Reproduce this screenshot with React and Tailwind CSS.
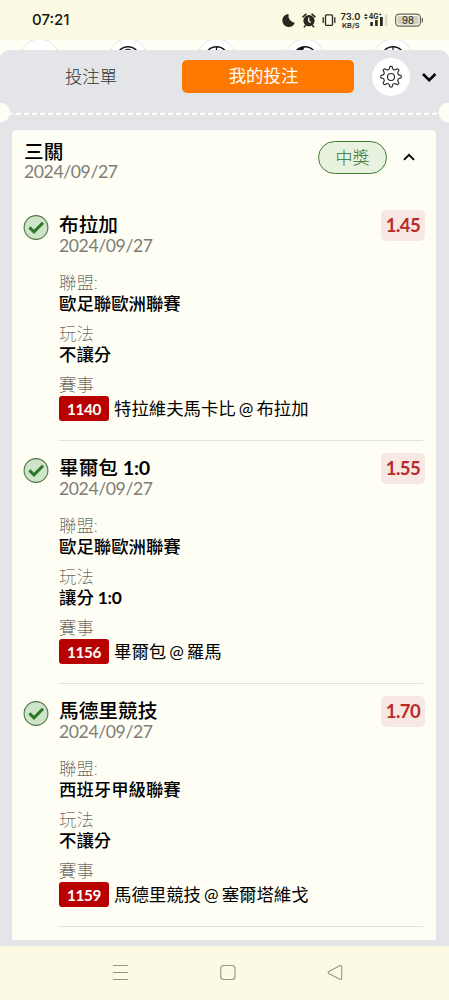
import React from 'react';

const bets = [
  { title: '布拉加', odds: '1.45', league: '歐足聯歐洲聯賽', play: '不讓分', id: '1140', away: '特拉維夫馬卡比', home: '布拉加' },
  { title: '畢爾包', score: '1:0', odds: '1.55', league: '歐足聯歐洲聯賽', play: '讓分', playScore: '1:0', id: '1156', away: '畢爾包', home: '羅馬' },
  { title: '馬德里競技', odds: '1.70', league: '西班牙甲級聯賽', play: '不讓分', id: '1159', away: '馬德里競技', home: '塞爾塔維戈' },
];

function StatusIcons() {
  return (
    <svg width="170" height="24" viewBox="279 8 170 24" className="block" fill="none">
      <path d="M288.6 14a6.5 6.5 0 1 0 6.3 8.7A7 7 0 0 1 288.6 14z" fill="#292820" />
      <circle cx="309" cy="20.7" r="5.6" fill="#292820" />
      <path d="M303 16.8l3-2.6M315 16.8l-3-2.6M305.3 25.8l-1 1M312.7 25.8l1 1" stroke="#292820" strokeWidth="1.6" strokeLinecap="round" />
      <path d="M308.7 17.5v3.6l2 1.5" stroke="#fdfae4" strokeWidth="1.3" />
      <rect x="325.5" y="14.8" width="7" height="10.6" rx="1" stroke="#292820" strokeWidth="1.3" />
      <path d="M323.2 17.2v5.8M334.8 17.2v5.8" stroke="#292820" strokeWidth="1.3" />
      <text x="350.4" y="20.2" textAnchor="middle" textLength="20" lengthAdjust="spacingAndGlyphs" className="font-['Inter',sans-serif] text-[9.5px] font-semibold" fill="#292820">73.0</text>
      <text x="350.7" y="27.6" textAnchor="middle" textLength="17.5" lengthAdjust="spacingAndGlyphs" className="font-['Inter',sans-serif] text-[6.5px] font-semibold" fill="#292820">KB/S</text>
      <path d="M364 16l1.9-2.2 1.9 2.2zM364 17.2l1.9 2.2 1.9-2.2z" fill="#292820" />
      <text x="368.7" y="19" textLength="13" lengthAdjust="spacingAndGlyphs" className="font-['Inter',sans-serif] text-[7.5px] font-bold" fill="#292820">4G⁺</text>
      <path d="M370.3 22h2.6v4h-2.6zM375.1 20h2.6v6h-2.6zM380 17h2.8v9h-2.8z" fill="#292820" />
      <path d="M384.8 14.4h2.6V26h-2.6z" fill="#dedccb" />
      <rect x="395.6" y="14.2" width="24.8" height="12" rx="3.6" stroke="#68675d" strokeWidth="1.2" />
      <rect x="397.3" y="15.9" width="21.3" height="8.6" rx="2" fill="#d2d0c0" />
      <path d="M422.3 18v4.4" stroke="#68675d" strokeWidth="1.3" />
      <text x="408" y="23.9" textAnchor="middle" textLength="12" lengthAdjust="spacingAndGlyphs" className="font-['Inter',sans-serif] text-[10px]" fill="#292820">98</text>
    </svg>
  );
}

function SportStrip() {
  return (
    <svg width="449" height="20" viewBox="0 40 449 20" className="block">
      {[39.5, 128, 216.5, 305, 393].map((x, i) => (
        <g key={x} fill="none">
          <circle cx={x} cy="58.5" r="19.5" fill="#fff" stroke="#e4e4df" />
          {i > 0 && <circle cx={x} cy="58.5" r="11.7" stroke="#161616" strokeWidth="1.6" />}
          {i === 1 && <path d={`M${x - 4} 50.5l4-1.5 4 1.5`} stroke="#161616" strokeWidth="1" />}
          {(i === 2 || i === 4) && <path d={`M${x} 47v4`} stroke="#161616" strokeWidth="1.2" />}
          {i === 3 && <path d={`M${x} 46.8a11.7 11.7 0 0 0-9.5 5.5l7-1.5z`} fill="#161616" />}
        </g>
      ))}
    </svg>
  );
}

function Gear() {
  return (
    <svg width="24" height="24" viewBox="0 0 24 24" fill="none" stroke="#26282a" strokeWidth="1.15" strokeLinejoin="round">
      <circle cx="12" cy="12" r="3.5" />
      <path d="M10.3 3.6 10.9 1.6q1.1-.6 2.2 0l.6 2q.3.8 1.2 1.1.9.4 1.6 0l1.8-1q1.2.4 1.6 1.6l-1 1.9q-.4.7 0 1.5.3.9 1.1 1.2l2 .6q.6 1.2 0 2.4l-2 .6q-.8.3-1.1 1.2-.4.8 0 1.5l1 1.9q-.4 1.2-1.6 1.6l-1.8-1q-.7-.4-1.6 0-.9.3-1.2 1.1l-.6 2q-1.1.6-2.2 0l-.6-2q-.3-.8-1.2-1.1-.9-.4-1.6 0l-1.8 1q-1.2-.4-1.6-1.6l1-1.9q.4-.7 0-1.5-.3-.9-1.1-1.2l-2-.6q-.6-1.2 0-2.4l2-.6q.8-.3 1.1-1.2.4-.8 0-1.5l-1-1.9q.4-1.2 1.6-1.6l1.8 1q.7.4 1.6 0 .9-.3 1.2-1.1z" />
    </svg>
  );
}

function Bet({ bet }) {
  return (
    <article className="flex h-[243px] px-[11px]">
      <svg width="26" height="26" viewBox="0 0 26 26" className="shrink-0" fill="none">
        <circle cx="13" cy="12.5" r="11.9" fill="#cfe5c9" stroke="#4d7547" strokeWidth="1.1" />
        <path d="M6.4 12.4 11 16.8 20 7.7" stroke="#2d7826" strokeWidth="3" />
      </svg>
      <div className="ml-[10px] flex-1">
        <div className="flex justify-between">
          <div>
            <h2 className="text-[19.7px] leading-5 font-medium text-black">
              {bet.title}
              {bet.score && <span className="font-bold tracking-[-0.2px]"> {bet.score}</span>}
            </h2>
            <p className="pt-px text-[17.6px] leading-5 tracking-[-0.4px] text-[#7d7c76]">2024/09/27</p>
          </div>
          <span className="-mt-[5px] flex h-[31px] w-[44px] items-center justify-center rounded-[5px] bg-[#f8e8e3] text-[18.5px] font-bold tracking-[-0.5px] text-[#b92b2b]">{bet.odds}</span>
        </div>
        <dl className="mt-[17px] text-[17.4px] leading-5">
          <dt className="font-thin text-[#33322e]">聯盟:</dt>
          <dd className="pt-px font-medium text-black">{bet.league}</dd>
          <dt className="mt-[10px] font-thin text-[#33322e]">玩法</dt>
          <dd className="pt-px font-medium text-black">
            {bet.play}
            {bet.playScore && <span className="font-bold tracking-[-0.3px]"> {bet.playScore}</span>}
          </dd>
          <dt className="mt-[10px] font-thin text-[#33322e]">賽事</dt>
          <dd className="mt-px flex h-[25px] items-center text-black">
            <span className="flex h-[25px] w-[50px] items-center justify-center rounded-[3px] bg-[#b80000] text-[15.3px] font-bold tracking-[-0.4px] text-white">{bet.id}</span>
            <span className="ml-[5px] whitespace-nowrap [word-spacing:-1.4px]">{bet.away} @ {bet.home}</span>
          </dd>
        </dl>
        <div className="mt-[19px] mr-[2px] border-t border-[#e2e1dc]" />
      </div>
    </article>
  );
}

export default function App() {
  return (
    <main lang="zh-Hant" className="flex h-[1000px] w-[449px] flex-col overflow-hidden bg-[#fffef5] font-['Lato','Noto_Sans_CJK_TC',sans-serif]">
      <header className="flex h-10 shrink-0 items-center justify-between bg-[#fdfae4] pl-8">
        <time className="pt-px font-['Inter',sans-serif] text-[15px] font-medium text-[#171710]">07:21</time>
        <StatusIcons />
      </header>
      <div className="h-5 shrink-0"><SportStrip /></div>
      <section className="relative -mt-[10px] flex h-[896px] shrink-0 flex-col rounded-t-[9px] bg-[#e3e5e8]">
        <nav className="flex h-[53px] items-center pr-[11px]">
          <button className="w-[182px] pt-px text-[17.4px] font-light text-[#333]">投注單</button>
          <button className="h-[33px] w-[172px] rounded-[5px] bg-[#ff7900] pr-[9px] text-[17.4px] text-white">我的投注</button>
          <span className="ml-[18px] flex size-[38px] items-center justify-center rounded-full bg-white"><Gear /></span>
          <svg width="16" height="12" viewBox="0 0 16 12" className="ml-[11px]" fill="none"><path d="m2 3 6.2 6.2L14.4 3" stroke="#050505" strokeWidth="2.6" /></svg>
        </nav>
        <svg width="449" height="20" viewBox="0 0 449 20" className="block shrink-0">
          <path d="M8 10.8h432" stroke="#fffef7" strokeWidth="2" strokeDasharray="5 3" />
          <circle cx="0" cy="9.5" r="10" fill="#fffef5" />
          <circle cx="448.5" cy="9.5" r="10" fill="#fffef5" />
        </svg>
        <div className="mr-[13px] ml-[12px] mt-[7px] h-[810px] overflow-hidden rounded-t-[5px] bg-[#fffef5]">
          <div className="flex h-[85px] justify-between pl-[12px]">
            <div className="pt-[12px]">
              <h1 className="text-[19.7px] leading-5 font-medium text-black">三關</h1>
              <p className="text-[17.6px] leading-5 tracking-[-0.4px] text-[#7d7c76]">2024/09/27</p>
            </div>
            <div className="mt-[11px] flex h-[33px] items-center pr-[21px]">
              <span className="flex h-[33px] w-[69px] items-center justify-center rounded-full border border-[#3c7a32] bg-[#e9f1df] text-[17px] font-light text-[#2f7527]">中獎</span>
              <svg width="12" height="9" viewBox="0 0 12 9" className="ml-[16px]" fill="none"><path d="m1 6.9 5-5 5 5" stroke="#050505" strokeWidth="2" /></svg>
            </div>
          </div>
          {bets.map((bet) => <Bet key={bet.id} bet={bet} />)}
        </div>
      </section>
      <footer className="flex h-[54px] shrink-0 items-center bg-[#fdfae4]">
        <svg width="449" height="54" viewBox="0 946 449 54" fill="none" stroke="#96958b" strokeWidth="1.1">
          <path d="M113 965.5h15M113 972.5h15M113 979.5h15" />
          <rect x="220.7" y="965.5" width="14.3" height="14" rx="3" />
          <path d="M328.8 971.4 339.8 965.8q1.9-.8 1.9 1v11.5q0 1.8-1.8.9l-11-5.7q-1.5-1 0-2.1z" />
        </svg>
      </footer>
    </main>
  );
}
